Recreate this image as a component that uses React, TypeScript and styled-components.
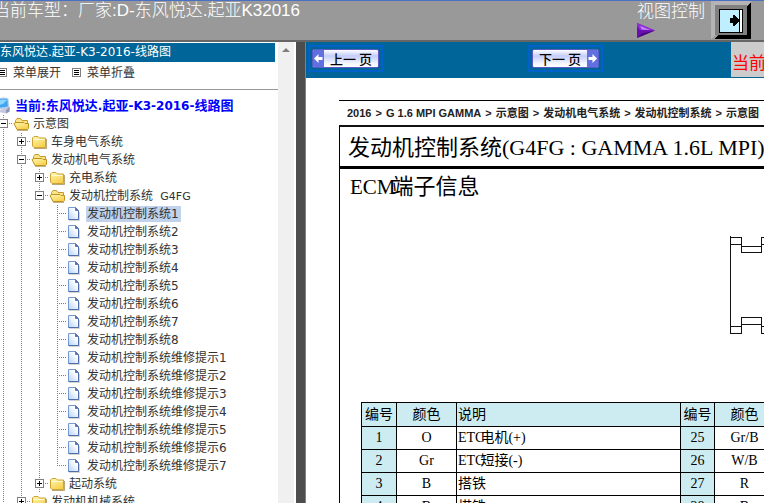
import React from 'react';
import styled, { createGlobalStyle } from 'styled-components';

const GlobalStyle = createGlobalStyle`
  *, *::before, *::after { box-sizing: border-box; }
  body { margin: 0; overflow: hidden; background: #fff; }
  button { margin: 0; padding: 0; border: 0; background: none; font: inherit; color: inherit; cursor: pointer; }
  svg { display: block; flex: none; }
`;

const CJK = `"Noto Sans CJK SC", sans-serif`;
const UI = `"DejaVu Sans", ${CJK}`;
const ARIAL = `"Liberation Sans", ${CJK}`;
const SERIF = `"Liberation Serif", ${CJK}`;

/* ---------- shell ---------- */

const Shell = styled.div`
  display: flex;
  flex-direction: column;
  height: 100vh;
  margin-left: -8px;
  overflow: hidden;
`;

const Header = styled.header`
  display: flex;
  flex: none;
  height: 42px;
  padding-right: 13px;
  background: #999;
  border-top: 1px solid #4a6fc4;
  border-bottom: 2px solid #666;
  color: #fff;
  font: 300 17px/20px ${ARIAL};
  white-space: nowrap;
`;

const CarTitle = styled.h1`
  flex: 1;
  margin: 0;
  padding-left: 1px;
  overflow: hidden;
  font: inherit;
`;

const ViewControl = styled.div`
  display: flex;
  flex-direction: column;
  gap: 1px;
  margin-right: 6px;
  padding-top: 1px;
`;

const Frames = styled.div`
  display: flex;
  flex: 1;
  min-height: 0;
`;

const Splitter = styled.div`
  flex: none;
  width: 10px;
  background: #4d4d4d;
  border-right: 1px solid #808080;
`;

/* ---------- sidebar ---------- */

const Sidebar = styled.nav`
  flex: none;
  display: flex;
  width: 304px;
  padding-right: 2px;
  background: #fff;
  color: #333;
  font: 12px/18px ${UI};
  white-space: nowrap;
`;

const SideContent = styled.div`
  flex: 1;
  min-width: 0;
  overflow: hidden;
`;

const SideTitle = styled.h2`
  margin: 1px 3px 0 0;
  padding-left: 8px;
  height: 19px;
  background: #069;
  color: #fff;
  font: inherit;
`;

const SideActions = styled.div`
  display: flex;
  gap: 11px;
  height: 28px;
  padding: 2px 0 8px 6px;
  border-bottom: 1px solid #999;
`;

const SideAction = styled.button`
  display: flex;
  align-items: center;
  gap: 6px;
`;

const ScrollTrack = styled.div`
  flex: none;
  display: flex;
  justify-content: center;
  width: 16px;
  padding-top: 6px;
  background: #f0f0f0;
`;

const Tree = styled.ul`
  margin: 0;
  padding: 7px 0 0 3px;
  list-style: none;
`;

const TreeRow = styled.li`
  display: flex;
  align-items: center;
  height: 18px;
`;

const RootLabel = styled.a`
  padding-left: 2px;
  color: #00f;
  font-size: 13px;
  font-weight: 700;
  text-decoration: none;
`;

const NodeLabel = styled.a<{ $active?: boolean }>`
  margin-left: 1px;
  padding: 0 2px 0 1px;
  line-height: 16px;
  color: #333;
  text-decoration: none;
  background: ${(p) => (p.$active ? '#c0d2ec' : 'transparent')};
`;

const Latin = styled.span<{ $size: number }>`
  font-size: ${(p) => p.$size}px;
`;

/** Renders western runs at their own size inside Chinese text. */
function Mixed({ text, size }: { text: string; size: number }) {
  const runs = text.match(/[\x20-\x7e]+|[^\x20-\x7e]+/g) || [];
  return (
    <>
      {runs.map((run, i) =>
        /^[\x20-\x7e]/.test(run) ? <Latin key={i} $size={size}>{run}</Latin> : run,
      )}
    </>
  );
}

/* ---------- main pane ---------- */

const Pane = styled.main`
  flex: 1;
  min-width: 0;
  overflow: hidden;
  background: #fff;
`;

const Toolbar = styled.div`
  display: grid;
  grid-template-columns: 220px 203px 1fr;
  height: 36px;
  padding: 0 0 1px 2px;
  background: #069;
`;

const PageButton = styled.button`
  align-self: start;
  justify-self: start;
  margin-top: 3px;
  padding: 2px;
  border: 2px solid #0060cc;
`;

const ButtonFace = styled.span<{ $side: 'left' | 'right' }>`
  display: flex;
  flex-direction: ${(p) => (p.$side === 'left' ? 'row' : 'row-reverse')};
  width: 67px;
  height: 19px;
  border: 1px solid #5a5ac8;
  border-radius: 2px;
  overflow: hidden;
  background: linear-gradient(#fff 0, #c4cdfa 35%, #f4f6ff 80%, #fff);
  color: #000;
  font: 500 13px/17px ${CJK};
  white-space: nowrap;
`;

const ButtonText = styled.span`
  flex: 1;
  text-align: center;
`;

const CurrentBox = styled.div`
  padding: 11px 0 0 1px;
  overflow: hidden;
  background: #ccc;
  color: #f00;
  font: 400 17px/22px ${ARIAL};
  white-space: nowrap;
`;

const Doc = styled.article`
  margin: 22px 0 0 33px;
  border-top: 1px solid #000;
  color: #000;
  white-space: nowrap;
`;

const Crumbs = styled.div`
  display: flex;
  gap: 4px;
  height: 24px;
  padding-left: 8px;
  color: #222;
  font: 700 11px/25px ${ARIAL};
`;

const Sheet = styled.section`
  border-top: 2px solid #111;
  border-left: 1px solid #000;
  font-family: ${SERIF};
`;

const SheetTitle = styled.h2`
  height: 42px;
  margin: 0;
  padding-left: 8px;
  border-bottom: 3px solid #000;
  font-size: 22px;
  font-weight: 400;
  line-height: 42px;
`;

const SheetSubtitle = styled.h3`
  height: 36px;
  margin: 0;
  padding-left: 10px;
  font-size: 22px;
  font-weight: 400;
  line-height: 36px;
`;

const Tight = styled.span`
  margin-left: -4px;
`;

const Figure = styled.figure`
  margin: 0;
  padding: 31px 0 67px 390px;
  overflow: hidden;
`;

const PinTable = styled.table`
  width: 640px;
  margin-left: 21px;
  table-layout: fixed;
  border-collapse: collapse;
  font-size: 14px;
  line-height: 20px;
  text-align: center;
`;

const PinCell = styled.td<{ $tint?: boolean; $left?: boolean }>`
  height: 23px;
  padding: 0 0 0 ${(p) => (p.$left ? 1 : 0)}px;
  border: 1px solid #000;
  background: ${(p) => (p.$tint ? '#ccecf2' : '#fff')};
  text-align: ${(p) => (p.$left ? 'left' : 'center')};
  font-weight: 400;

  thead & {
    height: 24px;
  }
`;

/* ---------- drawings ---------- */

const dots = { stroke: '#808080', strokeDasharray: '1 1', shapeRendering: 'crispEdges' as const };

function Guide({ kind }: { kind: string }) {
  return (
    <svg width="18" height="18" aria-hidden="true">
      {kind !== ' ' && <path d={kind === 'L' ? 'M8.5 0V9' : 'M8.5 0V18'} {...dots} />}
      {kind !== '|' && kind !== ' ' && <path d="M8 8.5H18" {...dots} />}
      {(kind === '+' || kind === '-') && (
        <g shapeRendering="crispEdges">
          <rect x="4.5" y="4.5" width="8" height="8" fill="#fff" stroke="#808080" />
          <path d="M6 8.5H11" stroke="#000" />
          {kind === '+' && <path d="M8.5 6V11" stroke="#000" />}
        </g>
      )}
    </svg>
  );
}

function FolderIcon({ open }: { open?: boolean }) {
  return (
    <svg width="18" height="18" aria-hidden="true">
      <defs>
        <linearGradient id="folder" x1="0" y1="0" x2="0.6" y2="1">
          <stop offset="0" stopColor="#fff8b0" />
          <stop offset="1" stopColor="#f7d050" />
        </linearGradient>
      </defs>
      {open ? (
        <>
          <path d="M2.5 10V5.5L4 3.5H7.5L9 5.5H14.5V9" fill="#fbe48c" stroke="#c49a28" />
          <path d="M5 7.5H11L12 8.5H15.5V13.5L14.5 14.5H4L1 8.5Q3 7 5 7.5Z" fill="url(#folder)" stroke="#c09420" />
          <path d="M4 15.5H15" stroke="#8a6a20" opacity="0.5" />
        </>
      ) : (
        <>
          <path d="M1.5 13V5L3 3.5H7L8.5 5H14.5V14.5H3Z" fill="url(#folder)" stroke="#d0a434" />
          <path d="M2.5 6.5H13.5" stroke="#fffbd8" />
          <path d="M3 15.5H15.5V6" fill="none" stroke="#8a6a20" opacity="0.6" />
        </>
      )}
    </svg>
  );
}

function FileIcon() {
  return (
    <svg width="18" height="18" aria-hidden="true">
      <defs>
        <linearGradient id="sheet" x1="1" y1="0" x2="0" y2="1">
          <stop offset="0.3" stopColor="#fff" />
          <stop offset="1" stopColor="#b4d2fa" />
        </linearGradient>
      </defs>
      <path d="M1.5 2.5H8.5L11.5 5.5V14.5H1.5Z" fill="url(#sheet)" stroke="#7898d0" />
      <path d="M8.5 2.5V5.5H11.5Z" fill="#4f70b8" stroke="#5a78b8" />
      <path d="M11.5 6V14.5H1.5" fill="none" stroke="#4f6cab" />
      <path d="M2 15.5H12.5V7" fill="none" stroke="#888" opacity="0.35" />
    </svg>
  );
}

function ComputerIcon() {
  return (
    <svg width="18" height="18" aria-hidden="true">
      <path d="M2 2Q8 -0.5 13.5 1.5L14 11L4 12Z" fill="#a9c8ee" />
      <path d="M3 3Q8 1 12.4 2.4L12.8 9.6L4 10.6Z" fill="#3fa6f0" />
      <path d="M4 3.4Q8 2 12 3L8 7L4 8Z" fill="#8fd6fc" />
      <path d="M9 11L14.5 9.5V14.5L11 16.5L4 15L5 13Z" fill="#c3c9de" />
      <path d="M14.5 9.5V14.5L11 16.5L11 13.5Z" fill="#8c95b8" />
    </svg>
  );
}

function MenuIcon() {
  return (
    <svg width="9" height="9" shapeRendering="crispEdges" aria-hidden="true">
      <rect x="0.5" y="0.5" width="8" height="8" fill="#fff" stroke="#808080" />
      <path d="M2 2.5H7M2 4.5H7M2 6.5H7" stroke="#000" />
    </svg>
  );
}

function PlayIcon() {
  return (
    <svg width="18" height="15" aria-hidden="true">
      <path d="M0 0L18 7.5L0 15Z" fill="#6a10b0" />
      <path d="M0 0L18 7.5L3 7L0 3Z" fill="#8f2fd8" />
      <path d="M3 3L13 7L5 6.4Z" fill="#c78cf6" />
      <path d="M0 15L18 7.5L5 10.5Z" fill="#45087c" />
    </svg>
  );
}

function PanelIcon() {
  return (
    <svg width="40" height="39" shapeRendering="crispEdges" aria-hidden="true">
      <rect width="40" height="39" fill="#999" />
      <path d="M0 0H40L36 4H4V35L0 38Z" fill="#b4b4b4" />
      <path d="M40 1V38H3L7 34H36V5Z" fill="#000" />
      <rect x="4" y="4" width="32" height="30" fill="#808080" />
      <rect x="8" y="8" width="24" height="24" fill="#000" />
      <rect x="9" y="9" width="19" height="22" fill="#bfefff" />
      <rect x="29" y="9" width="2" height="22" fill="#fff" />
      <path d="M19 17H22V14H23L28 19V20L23 25H22V22H19Z" fill="#000" />
    </svg>
  );
}

function ArrowTab({ left }: { left?: boolean }) {
  return (
    <svg width="11" height="17" aria-hidden="true">
      <rect width="11" height="17" fill="#6070e0" />
      <path
        d={left ? 'M1 8.5L5.5 4V7H9.5V10H5.5V13Z' : 'M10 8.5L5.5 4V7H1.5V10H5.5V13Z'}
        fill="#fff"
      />
    </svg>
  );
}

function Connector() {
  return (
    <svg width="260" height="99" fill="none" stroke="#111" shapeRendering="crispEdges" role="img" aria-label="ECM">
      <path d="M0.5 0V98M0 1.5H12M11.5 1V17M0 8.5H12M11 10.5H31M11 16.5H32M31.5 17V1M31 1.5H260M31 8.5H260" />
      <path d="M0 97.5H12M11.5 98V81M0 90.5H12M11 88.5H31M11 81.5H32M31.5 81V98M31 97.5H260M31 90.5H260" />
    </svg>
  );
}

/* ---------- data ---------- */

type Node = { guides: string; label: string; icon: 'open' | 'folder' | 'file'; active?: boolean };

const numbered = (name: string, count: number, lastClosed = false): Node[] =>
  Array.from({ length: count }, (_, i) => ({
    guides: '|||' + (lastClosed && i === count - 1 ? 'L' : 'T'),
    label: `${name}${i + 1}`,
    icon: 'file' as const,
  }));

const controlPages = numbered('发动机控制系统', 8);
controlPages[0].active = true;

const nodes: Node[] = [
  { guides: '-', label: '示意图', icon: 'open' },
  { guides: '|+', label: '车身电气系统', icon: 'folder' },
  { guides: '|-', label: '发动机电气系统', icon: 'open' },
  { guides: '||+', label: '充电系统', icon: 'folder' },
  { guides: '||-', label: '发动机控制系统  G4FG', icon: 'open' },
  ...controlPages,
  ...numbered('发动机控制系统维修提示', 7, true),
  { guides: '||+', label: '起动系统', icon: 'folder' },
  { guides: '|+', label: '发动机机械系统', icon: 'folder' },
];

const crumbs = ['2016', 'G 1.6 MPI GAMMA', '示意图', '发动机电气系统', '发动机控制系统', '示意图'];

const pins = [
  ['1', 'O', 'ETC', '电机(+)', '25', 'Gr/B'],
  ['2', 'Gr', 'ETC', '短接(-)', '26', 'W/B'],
  ['3', 'B', '', '搭铁', '27', 'R'],
  ['4', 'B', '', '搭铁', '28', 'B'],
];

export default function App() {
  return (
    <>
      <GlobalStyle />
      <Shell>
        <Header>
          <CarTitle>当前车型：厂家:D-东风悦达.起亚K32016</CarTitle>
          <ViewControl>
            视图控制
            <PlayIcon />
          </ViewControl>
          <button type="button" aria-label="视图控制"><PanelIcon /></button>
        </Header>
        <Frames>
          <Sidebar>
            <SideContent>
              <SideTitle><Mixed text="东风悦达.起亚-K3-2016-线路图" size={12} /></SideTitle>
              <SideActions>
                <SideAction type="button"><MenuIcon />菜单展开</SideAction>
                <SideAction type="button"><MenuIcon />菜单折叠</SideAction>
              </SideActions>
              <Tree>
                <TreeRow>
                  <ComputerIcon />
                  <RootLabel href="#root"><Mixed text="当前:东风悦达.起亚-K3-2016-线路图" size={12} /></RootLabel>
                </TreeRow>
                {nodes.map((n) => (
                  <TreeRow key={n.label}>
                    {n.guides.split('').map((g, i) =>
                      g === '+' || g === '-' ? (
                        <button key={i} type="button" aria-label={n.label}><Guide kind={g} /></button>
                      ) : (
                        <Guide key={i} kind={g} />
                      ),
                    )}
                    {n.icon === 'file' ? <FileIcon /> : <FolderIcon open={n.icon === 'open'} />}
                    <NodeLabel href="#node" $active={n.active}>
                      <Mixed text={n.label.replace('  ', ' \u00a0')} size={n.icon === 'file' ? 12 : 11} />
                    </NodeLabel>
                  </TreeRow>
                ))}
              </Tree>
            </SideContent>
            <ScrollTrack>
              <svg width="8" height="4" aria-hidden="true"><path d="M0 4L4 0L8 4Z" fill="#808080" /></svg>
            </ScrollTrack>
          </Sidebar>
          <Splitter />
          <Pane>
            <Toolbar>
              <PageButton type="button">
                <ButtonFace $side="left"><ArrowTab left /><ButtonText>上一 页</ButtonText></ButtonFace>
              </PageButton>
              <PageButton type="button">
                <ButtonFace $side="right"><ArrowTab /><ButtonText>下一 页</ButtonText></ButtonFace>
              </PageButton>
              <CurrentBox>当前</CurrentBox>
            </Toolbar>
            <Doc>
              <Crumbs>
                {crumbs.map((c, i) => (
                  <React.Fragment key={i}>
                    {i > 0 && <span>&gt;</span>}
                    <span>{c}</span>
                  </React.Fragment>
                ))}
              </Crumbs>
              <Sheet>
                <SheetTitle>发动机控制系统(G4FG : GAMMA 1.6L MPI)</SheetTitle>
                <SheetSubtitle><Latin $size={21}>ECM</Latin><Tight>端子信息</Tight></SheetSubtitle>
                <Figure><Connector /></Figure>
                <PinTable>
                  <colgroup>
                    <col width="35" /><col width="60" /><col width="224" />
                    <col width="34" /><col width="60" /><col />
                  </colgroup>
                  <thead>
                    <tr>
                      {['编号', '颜色', '说明', '编号', '颜色', '说明'].map((h, i) => (
                        <PinCell as="th" key={i} $tint $left={h === '说明'}>{h}</PinCell>
                      ))}
                    </tr>
                  </thead>
                  <tbody>
                    {pins.map(([no, color, prefix, text, no2, color2]) => (
                      <tr key={no}>
                        <PinCell $tint>{no}</PinCell>
                        <PinCell>{color}</PinCell>
                        <PinCell $left>{prefix}{prefix ? <Tight>{text}</Tight> : text}</PinCell>
                        <PinCell $tint>{no2}</PinCell>
                        <PinCell>{color2}</PinCell>
                        <PinCell />
                      </tr>
                    ))}
                  </tbody>
                </PinTable>
              </Sheet>
            </Doc>
          </Pane>
        </Frames>
      </Shell>
    </>
  );
}
